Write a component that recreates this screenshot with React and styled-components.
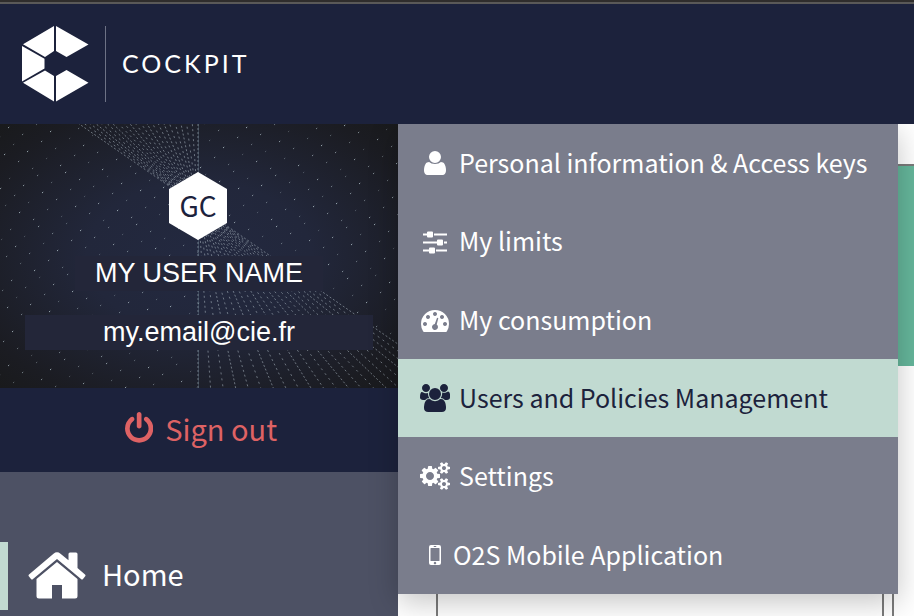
import React from "react";
import styled, { createGlobalStyle, css } from "styled-components";

const navy = "#1c223c";
const mint = "#c1dad1";

const GlobalStyle = createGlobalStyle`
  *, *::before, *::after { box-sizing: border-box; }
  body {
    margin: 0;
    background: #fff;
    font-family: "Noto Sans CJK SC", "Open Sans", sans-serif;
  }
  button { font-family: inherit; }
`;

const Page = styled.div`
  min-height: 100vh;
  display: flex;
  flex-direction: column;
  overflow: hidden;
`;

const Header = styled.header`
  position: relative;
  z-index: 3;
  display: flex;
  align-items: center;
  height: 124px;
  padding: 2px 20px 0;
  background: ${navy};
  border-top: 2px solid #2f2d2c;
  box-shadow: inset 0 2px #5a5958;
`;

const Brand = styled.a`
  display: flex;
  align-items: center;
  gap: 16px;
  color: #fff;
  text-decoration: none;
`;

const Divider = styled.span`
  width: 1px;
  height: 76px;
  background: #6d7285;
`;

const Wordmark = styled.span`
  padding-bottom: 2px;
  font-family: Lato, sans-serif;
  font-size: 25px;
  line-height: 32px;
  letter-spacing: 3px;
`;

const Body = styled.div`
  display: flex;
  flex: 1;
`;

const Sidebar = styled.aside`
  position: relative;
  z-index: 2;
  flex: none;
  width: 398px;
  background: #4d5164;
`;

const Profile = styled.section`
  position: relative;
  display: flex;
  flex-direction: column;
  align-items: center;
  height: 264px;
  padding: 48px 25px 38px;
  background: radial-gradient(ellipse at center, #232940 0%, #22273b 40%, #1b1c22 85%, #191a1c 100%);
`;

const Starfield = styled.svg`
  position: absolute;
  inset: 0;
  width: 100%;
  height: 100%;
`;

const Avatar = styled.div`
  position: relative;
  display: flex;
  align-items: center;
  justify-content: center;
  width: 58px;
  height: 68px;
  margin-right: 2px;
  padding-bottom: 2px;
  background: #fff;
  clip-path: polygon(50% 0, 100% 25%, 100% 75%, 50% 100%, 0 75%, 0 25%);
  color: ${navy};
  font-size: 28px;
  line-height: 36px;
`;

const ProfileLine = styled.div`
  position: relative;
  width: ${(p) => (p.$wide ? "100%" : "248px")};
  margin-top: ${(p) => (p.$wide ? "24px" : "16px")};
  background: #232639;
  color: #fff;
  font-family: "Liberation Sans", Arial, sans-serif;
  font-size: 27px;
  line-height: 35px;
  text-align: center;
`;

const SignOut = styled.button`
  display: flex;
  align-items: center;
  justify-content: center;
  gap: 12px;
  width: 100%;
  height: 84px;
  padding: 0 0 4px 4px;
  border: 0;
  background: ${navy};
  color: #de6264;
  font-size: 29px;
  line-height: 40px;
`;

const Nav = styled.nav`
  padding-top: 70px;
`;

const NavLink = styled.a`
  display: flex;
  align-items: center;
  gap: 16px;
  height: 68px;
  padding-left: 20px;
  border-left: 8px solid ${mint};
  color: #fff;
  font-size: 29px;
  line-height: 40px;
  text-decoration: none;
`;

const NavText = styled.span`
  padding-bottom: 6px;
`;

const Menu = styled.nav`
  position: absolute;
  top: 0;
  left: 100%;
  display: grid;
  grid-auto-rows: 1fr;
  min-width: 500px;
  min-height: 470px;
  background: #7a7d8c;
  box-shadow: 0 8px 28px rgba(0, 0, 0, 0.23);
`;

const MenuLink = styled.a`
  display: flex;
  align-items: center;
  gap: ${(p) => (p.$tight ? "0" : "6px")};
  padding: 0 19px;
  color: #fff;
  font-size: 25px;
  line-height: 36px;
  white-space: nowrap;
  text-decoration: none;
  ${(p) =>
    p.$active &&
    css`
      background: ${mint};
      color: ${navy};
    `}
`;

const MenuText = styled.span`
  padding-bottom: 2px;
`;

const IconSlot = styled.span`
  display: flex;
  justify-content: center;
  width: 36px;
`;

const Glyph = styled.svg`
  display: block;
  height: ${(p) => p.$size || 28}px;
  fill: currentColor;
`;

const Main = styled.main`
  flex: 1;
  min-width: 0;
  padding-top: 40px;
`;

const Banner = styled.div`
  height: 202px;
  border-top: 2px solid #7b7b7b;
  background: #65b69b;
`;

const Columns = styled.div`
  display: grid;
  grid-template-columns: 448px 448px;
  gap: 8px;
  padding-left: 38px;
`;

const Column = styled.section`
  min-height: 250px;
  border: solid #7b7b7b;
  border-width: 0 2px;
`;

const paths = {
  user: {
    box: "0 0 1792 1792",
    d: "M1600 1399q0 109-62.500 187t-150.500 78h-982q-88 0-150.500-78t-62.500-187q0-85 8.500-160.500t31.500-152 58.500-131 94-89 134.500-34.500q131 128 377 128t377-128q76 0 134.500 34.500t94 89 58.500 131 31.500 152 8.500 160.500zM1280 512q0 159-112.500 271.500t-271.500 112.500-271.500-112.500-112.500-271.500 112.500-271.500 271.500-112.500 271.500 112.500 112.500 271.500z",
  },
  sliders: {
    box: "0 -96 1792 1792",
    d: "M128 320H384V448H128zM832 320H1664V448H832zM128 832H1024V960H128zM1472 832H1664V960H1472zM128 1344H512V1472H128zM960 1344H1664V1472H960zM448 192h256q64 0 64 64v256q0 64-64 64h-256q-64 0-64-64v-256q0-64 64-64zM1088 704h256q64 0 64 64v256q0 64-64 64h-256q-64 0-64-64v-256q0-64 64-64zM576 1216h256q64 0 64 64v256q0 64-64 64h-256q-64 0-64-64v-256q0-64 64-64z",
  },
  gauge: {
    box: "0 0 1792 1792",
    d: "M896 256A896 896 0 0 0 0 1152Q0 1413 141 1635Q160 1664 195 1664H1597Q1632 1664 1651 1635Q1792 1413 1792 1152A896 896 0 0 0 896 256zM256 1024a128 128 0 1 0 0.100 0zM448 576a128 128 0 1 0 0.100 0zM896 384a128 128 0 1 0 0.100 0zM1344 576a128 128 0 1 0 0.100 0zM1536 1024a128 128 0 1 0 0.100 0zM1004 1185L1105 803Q1111 777 1088 762Q1052 750 1030 770Q1020 778 1017 790L881 1152A192 192 0 1 0 1004 1185z",
  },
  users: {
    box: "64 0 1920 1792",
    d: "M657 896q-162 5-265 128h-134q-82 0-138-40.500t-56-118.500q0-353 124-353 6 0 43.500 21t97.500 42.500 119 21.500q67 0 133-23-5 37-5 66 0 159 93 293zM1728 1533q0 120-73 189.500t-194 69.500h-874q-121 0-194-69.500t-73-189.500q0-53 3.500-103.500t14-109 26.500-108.500 43-97.500 62-81 85.500-53.500 111.500-20q10 0 43 21.500t73 48 107 48 135 21.500 135-21.500 107-48 73-48 43-21.500q61 0 111.500 20t85.500 53.500 62 81 43 97.500 26.500 108.500 14 109 3.500 103.500zM704 256q0 106-75 181t-181 75-181-75-75-181 75-181 181-75 181 75 75 181zM1408 640q0 159-112.500 271.500t-271.500 112.500-271.500-112.500-112.500-271.500 112.500-271.500 271.500-112.500 271.500 112.500 112.500 271.500zM1984 865q0 78-56 118.500t-138 40.500h-134q-103-123-265-128 93-134 93-293 0-29-5-66 66 23 133 23 59 0 119-21.500t97.500-42.500 43.500-21q124 0 124 353zM1856 256q0 106-75 181t-181 75-181-75-75-181 75-181 181-75 181 75 75 181z",
  },
  cogs: {
    box: "0 0 1920 1792",
    d: "M896 896q0-106-75-181t-181-75-181 75-75 181 75 181 181 75 181-75 75-181zm768 512q0-52-38-90t-90-38-90 38-38 90q0 53 37.500 90.500t90.500 37.500 90.500-37.500 37.500-90.500zm0-1024q0-52-38-90t-90-38-90 38-38 90q0 53 37.500 90.500t90.500 37.500 90.500-37.500 37.500-90.500zm-384 421v185q0 10-7 19.500t-16 10.500l-155 24q-11 35-32 76 34 48 90 115 7 11 7 20 0 12-7 19-23 30-82.500 89.500t-78.500 59.500q-11 0-21-7l-115-90q-37 19-77 31-11 108-23 155-7 24-30 24h-186q-11 0-20-7.500t-10-17.500l-23-153q-34-10-75-31l-118 89q-7 7-20 7-11 0-21-8-144-133-144-160 0-9 7-19 10-14 41-53t47-61q-23-44-35-82l-152-24q-10-1-17-9.500t-7-19.500v-185q0-10 7-19.500t16-10.500l155-24q11-35 32-76-34-48-90-115-7-11-7-20 0-12 7-20 22-30 82-89t79-59q11 0 21 7l115 90q34-18 77-32 11-108 23-154 7-24 30-24h186q11 0 20 7.500t10 17.500l23 153q34 10 75 31l118-89q8-7 20-7 11 0 21 8 144 133 144 160 0 8-7 19-12 16-42 54t-45 60q23 48 34 82l152 23q10 2 17 10.500t7 19.500zm640 533v140q0 16-149 31-12 27-30 52 51 113 51 138 0 4-4 7-122 71-124 71-8 0-46-47t-52-68q-20 2-30 2t-30-2q-14 21-52 68t-46 47q-2 0-124-71-4-3-4-7 0-25 51-138-18-25-30-52-149-15-149-31v-140q0-16 149-31 13-29 30-52-51-113-51-138 0-4 4-7 4-2 35-20t59-34 30-16q8 0 46 46.500t52 67.500q20-2 30-2t30 2q51-71 92-112l6-2q4 0 124 70 4 3 4 7 0 25-51 138 17 23 30 52 149 15 149 31zm0-1024v140q0 16-149 31-12 27-30 52 51 113 51 138 0 4-4 7-122 71-124 71-8 0-46-47t-52-68q-20 2-30 2t-30-2q-14 21-52 68t-46 47q-2 0-124-71-4-3-4-7 0-25 51-138-18-25-30-52-149-15-149-31v-140q0-16 149-31 13-29 30-52-51-113-51-138 0-4 4-7 4-2 35-20t59-34 30-16q8 0 46 46.500t52 67.500q20-2 30-2t30 2q51-71 92-112l6-2q4 0 124 70 4 3 4 7 0 25-51 138 17 23 30 52 149 15 149 31z",
  },
  mobile: {
    box: "0 0 1792 1792",
    d: "M640 256H1152Q1280 256 1280 384V1408Q1280 1536 1152 1536H640Q512 1536 512 1408V384Q512 256 640 256zM640 448Q608 448 608 480V1248Q608 1280 640 1280H1152Q1184 1280 1184 1248V480Q1184 448 1152 448zM816 320V384H976V320zM896 1328a80 80 0 1 0 0.100 0z",
  },
  power: {
    box: "128 0 1536 1792",
    d: "M1664 896q0 156-61 298t-164 245-245 164-298 61-298-61-245-164-164-245-61-298q0-182 80.500-343t226.500-270q43-32 95.500-25t83.500 50q32 42 24.500 94.500t-49.500 84.500q-98 74-151.500 181t-53.500 228q0 104 40.500 198.500t109.500 163.500 163.500 109.500 198.500 40.500 198.500-40.500 163.500-109.500 109.500-163.500 40.500-198.500q0-121-53.500-228t-151.500-181q-42-32-49.500-84.500t24.500-94.500q31-43 84-50t95 25q146 109 226.500 270t80.500 343zm-640-768v640q0 52-38 90t-90 38-90-38-38-90v-640q0-52 38-90t90-38 90 38 38 90z",
  },
  home: {
    box: "0 0 58 48",
    d: "M29 10L49.500 27V44Q49.500 46.500 47 46.500H34V33H24V46.500H11Q8.500 46.500 8.500 44V27zM25.500 1.700Q29 -1 32.500 1.700L40.500 8.300V2Q40.500 0.500 42 0.500H48Q49.500 0.500 49.500 2V16L57 22.500Q58 23.500 57 24.500L55 27Q54 28 53 27L29 7L5 27Q4 28 3 27L1 24.500Q0 23.500 1 22.500z",
  },
};

function Icon({ name, size }) {
  const { box, d } = paths[name];
  return (
    <Glyph viewBox={box} $size={size} aria-hidden="true">
      <path d={d} fillRule="evenodd" />
    </Glyph>
  );
}

function Logo() {
  return (
    <svg width="69" height="76" viewBox="20 26 69 76" fill="#fff" aria-hidden="true">
      <path d="M54 26V51L45 57L23 44.200zM56 26L88.500 44.500L66.500 57L56 51zM22 46L44.500 58.800V68.500L22 81.500zM54 101.500L23 82.800L45 70.500L54 76zM56 101.500L88.500 82.800L66.500 70L56 76z" />
    </svg>
  );
}

// Two fans of dashed rays meet behind the avatar; loose dots fill the rest.
function buildStars() {
  const dots = [];
  for (let row = 0; row < 17; row++) {
    for (let col = 0; col < 30; col++) {
      const x = col * 14 + ((row * 5) % 14) - 6;
      const y = row * 17 + ((col * 7) % 17) - 4;
      const dx = x - 198;
      const dy = y - 82;
      const inFan = dx * dy > 0 && Math.abs(dy) > Math.abs(dx) * 0.68;
      if (!inFan) dots.push([x, y, 0.35 + ((row * 3 + col * 5) % 7) / 11]);
    }
  }
  const rays = [];
  for (let i = 0; i < 22; i++) {
    rays.push({ dx: i * 20, dash: 2 + (i % 3) });
  }
  return { dots, rays };
}

const stars = buildStars();

function Stars() {
  return (
    <Starfield viewBox="0 0 398 264" preserveAspectRatio="xMidYMid slice" aria-hidden="true">
      {stars.dots.map(([x, y, o], i) => (
        <path key={i} d={`M${x} ${y + 1}l1.200-1`} stroke="#a9b8c0" strokeOpacity={o} />
      ))}
      {stars.rays.map((r, i) => (
        <g key={i} stroke="#a3afb9" strokeWidth="0.800" strokeOpacity="0.750" strokeDasharray={`2 ${r.dash}`}>
          <path d={`M198 82L${198 - r.dx} -208`} />
          <path d={`M198 82L${198 + r.dx} 372`} />
        </g>
      ))}
      <path d="M198.500 0V264" stroke="#6f8795" strokeOpacity="0.350" />
    </Starfield>
  );
}

const menuItems = [
  { icon: "user", label: "Personal information & Access keys" },
  { icon: "sliders", label: "My limits" },
  { icon: "gauge", label: "My consumption" },
  { icon: "users", label: "Users and Policies Management", active: true },
  { icon: "cogs", label: "Settings" },
  { icon: "mobile", label: "O2S Mobile Application", tight: true },
];

export default function App() {
  return (
    <Page>
      <GlobalStyle />
      <Header>
        <Brand href="#">
          <Logo />
          <Divider />
          <Wordmark>COCKPIT</Wordmark>
        </Brand>
      </Header>
      <Body>
        <Sidebar>
          <Profile>
            <Stars />
            <Avatar>GC</Avatar>
            <ProfileLine>MY USER NAME</ProfileLine>
            <ProfileLine $wide>my.email@cie.fr</ProfileLine>
          </Profile>
          <SignOut type="button">
            <Icon name="power" size={33} />
            Sign out
          </SignOut>
          <Nav aria-label="Main">
            <NavLink href="#home" aria-current="page">
              <Icon name="home" size={48} />
              <NavText>Home</NavText>
            </NavLink>
          </Nav>
          <Menu aria-label="Account">
            {menuItems.map((item) => (
              <MenuLink key={item.label} href="#" $active={item.active} $tight={item.tight}>
                <IconSlot>
                  <Icon name={item.icon} />
                </IconSlot>
                <MenuText>{item.label}</MenuText>
              </MenuLink>
            ))}
          </Menu>
        </Sidebar>
        <Main>
          <Banner />
          <Columns>
            <Column />
            <Column />
          </Columns>
        </Main>
      </Body>
    </Page>
  );
}
